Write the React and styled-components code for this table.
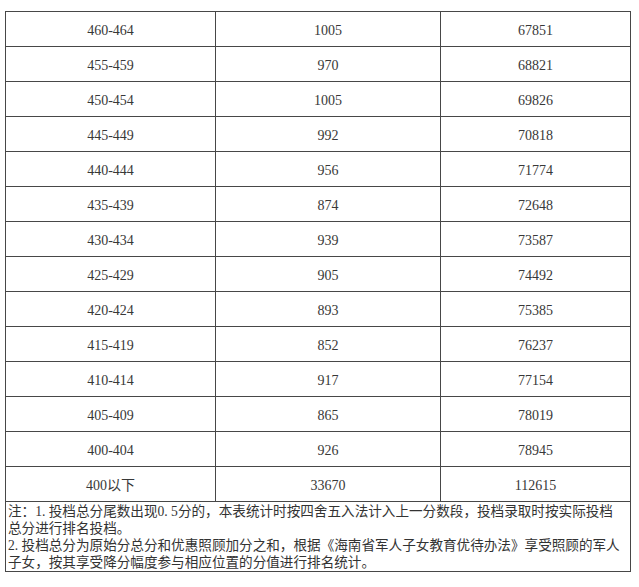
import React from "react";
import styled, { createGlobalStyle } from "styled-components";

const Global = createGlobalStyle`
  html, body { margin: 0; padding: 0; background: #fff; }
  body { font-family: "Liberation Serif", "Noto Sans CJK SC", serif; }
`;

const Page = styled.div`
  padding: 11px 0 0 5px;
`;

const Table = styled.table`
  border-collapse: collapse;
  width: 625px;
  table-layout: fixed;
  color: #383838;
`;

const Cell = styled.td`
  border: 1px solid #474747;
  height: 30px;
  padding: 4px 0 0 0;
  text-align: center;
  vertical-align: middle;
  font-size: 14px;
  line-height: 16px;
  font-family: "Liberation Serif", "Noto Sans CJK SC", serif;
`;

const NoteCell = styled.td`
  border: 1px solid #474747;
  height: 66px;
  padding: 1px 2px 0 2px;
  text-align: left;
  vertical-align: top;
  font-size: 13.6px;
  line-height: 17px;
  font-family: "Liberation Serif", "Noto Sans CJK SC", serif;
  color: #333;
`;

const Para = styled.div`
  white-space: nowrap;
  & + & { margin-top: 0; }
`;

const rows = [
  ["460-464", "1005", "67851"],
  ["455-459", "970", "68821"],
  ["450-454", "1005", "69826"],
  ["445-449", "992", "70818"],
  ["440-444", "956", "71774"],
  ["435-439", "874", "72648"],
  ["430-434", "939", "73587"],
  ["425-429", "905", "74492"],
  ["420-424", "893", "75385"],
  ["415-419", "852", "76237"],
  ["410-414", "917", "77154"],
  ["405-409", "865", "78019"],
  ["400-404", "926", "78945"],
  ["400以下", "33670", "112615"],
];

export default function App() {
  return (
    <>
      <Global />
      <Page>
        <Table>
          <colgroup>
            <col style={{ width: 210 }} />
            <col style={{ width: 225 }} />
            <col style={{ width: 190 }} />
          </colgroup>
          <tbody>
            {rows.map((r) => (
              <tr key={r[0]}>
                <Cell>{r[0]}</Cell>
                <Cell>{r[1]}</Cell>
                <Cell>{r[2]}</Cell>
              </tr>
            ))}
            <tr>
              <NoteCell colSpan={3}>
                <Para>
                  注：1. 投档总分尾数出现0. 5分的，本表统计时按四舍五入法计入上一分数段，投档录取时按实际投档
                  <br />
                  总分进行排名投档。
                </Para>
                <Para>
                  2. 投档总分为原始分总分和优惠照顾加分之和，根据《海南省军人子女教育优待办法》享受照顾的军人
                  <br />
                  子女，按其享受降分幅度参与相应位置的分值进行排名统计。
                </Para>
              </NoteCell>
            </tr>
          </tbody>
        </Table>
      </Page>
    </>
  );
}
